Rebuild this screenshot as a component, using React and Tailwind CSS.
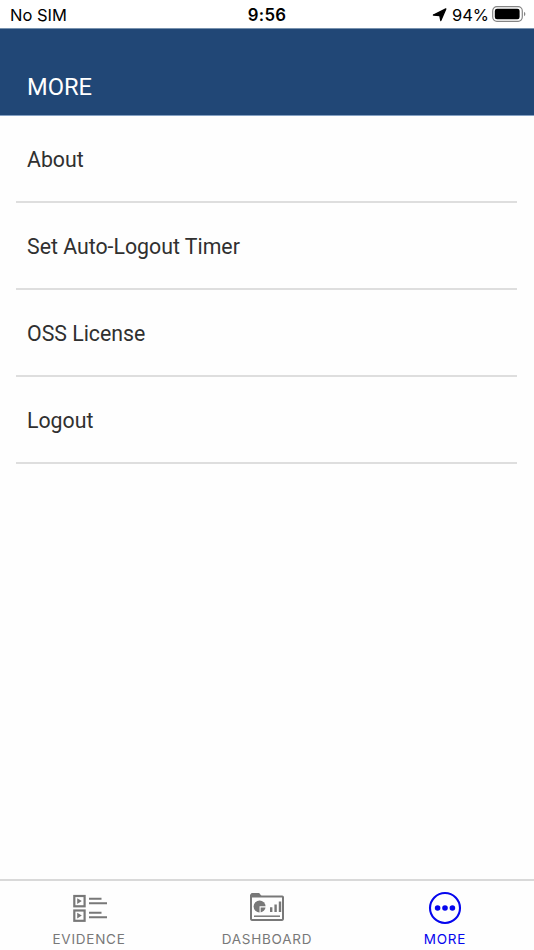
import React from "react";

const items = ["About", "Set Auto-Logout Timer", "OSS License", "Logout"];

function StatusBar() {
  return (
    <div className="grid h-7 grid-cols-3 items-center bg-white pt-0.5 font-['Inter',sans-serif] text-[16.5px] text-black">
      <span className="pl-[10px]">No SIM</span>
      <span className="pt-px text-center text-[16.8px] font-semibold tracking-[0.3px]">9:56</span>
      <div className="flex items-center justify-end pr-[8px]">
        <svg width="15" height="14" viewBox="0 0 15 14" className="mr-[5px]">
          <path d="M13.8 .9 8.8 12.6 7.8 7.6 1.4 7Z" fill="#000" stroke="#000" strokeWidth="1.3" strokeLinejoin="round" />
        </svg>
        <span>94%</span>
        <svg width="34" height="16" viewBox="0 0 34 16" className="ml-[3px] -mt-0.5">
          <rect x=".7" y=".7" width="29.6" height="14.6" rx="4.2" fill="none" stroke="#858585" strokeWidth="1.2" />
          <rect x="2.8" y="2.8" width="24.8" height="10.4" rx="2.2" fill="#000" />
          <path d="M32 5.8Q33.4 6.5 33.4 8T32 10.2Z" fill="#858585" />
        </svg>
      </div>
    </div>
  );
}

function EvidenceIcon() {
  return (
    <svg width="34" height="28" viewBox="0 0 34 28" fill="none" stroke="#787878" strokeWidth="2.2" className="ml-[2px]">
      <rect x="1.3" y="2" width="10.3" height="10.3" />
      <rect x="1.3" y="16.5" width="10.3" height="10.3" />
      <path d="M4.2 4.2v5.8l4.6-2.9ZM4.2 18.7v5.8l4.6-2.9Z" fill="#787878" stroke="none" />
      <path d="M16 4.7h12.5M16 9.2h18M16 18.8h12.5M16 23.3h18" strokeWidth="2" />
    </svg>
  );
}

function DashboardIcon() {
  return (
    <svg width="36" height="30" viewBox="0 0 36 30" fill="none" stroke="#787878" className="-ml-px">
      <rect x="2" y="3.5" width="32" height="23.4" rx=".8" strokeWidth="2" />
      <path d="M1 4V1.8L2.6 0h7.6L12.5 3v1Z" fill="#787878" stroke="none" />
      <circle cx="10.6" cy="13.4" r="6" fill="#787878" stroke="none" />
      <path d="M17.2 13.9H11.1V20" stroke="#fefefe" strokeWidth="1.1" />
      <path d="M22.2 14.2V19M26.6 11.4V19M31 8.4V19" strokeWidth="2.4" />
      <path d="M5 23.2h26" strokeWidth="1.5" />
    </svg>
  );
}

function MoreIcon() {
  return (
    <svg width="34" height="34" viewBox="0 0 34 34">
      <circle cx="17" cy="17" r="15" fill="none" stroke="#0505ee" strokeWidth="2.1" />
      <g fill="#0505ee">
        <circle cx="9.6" cy="17" r="2.8" />
        <circle cx="17" cy="17" r="2.8" />
        <circle cx="24.4" cy="17" r="2.8" />
      </g>
    </svg>
  );
}

function Tab({ icon, label, active }) {
  return (
    <button className={`flex flex-col items-center font-['Inter',sans-serif] text-[13.5px] leading-5 ${active ? "text-[#0505ee]" : "text-[#787878]"}`}>
      <span className="flex h-[54px] items-center justify-center">{icon}</span>
      <span className="-mt-[6px] tracking-[0.75px]">{label}</span>
    </button>
  );
}

export default function App() {
  return (
    <div className="flex h-[950px] w-[534px] flex-col overflow-hidden bg-[#fefefe] font-['Roboto',sans-serif]">
      <StatusBar />
      <header className="flex h-[88px] items-end border-y border-t-[#7892ae] border-b-[#84a0c2] bg-[#214776] px-[27px] pb-[12px]">
        <h1 className="text-[23.7px] leading-8 text-white">MORE</h1>
      </header>
      <ul className="flex-1 pl-4 pr-[17px]">
        {items.map((item) => (
          <li key={item} className="flex h-[87px] items-center border-b-2 border-[#dedede] pl-[11px] pt-[3px] text-[21.3px] text-[#303030]">
            {item}
          </li>
        ))}
      </ul>
      <nav className="grid h-[71px] grid-cols-3 border-t-2 border-[#d9d9d9]">
        <Tab icon={<EvidenceIcon />} label="EVIDENCE" />
        <Tab icon={<DashboardIcon />} label="DASHBOARD" />
        <Tab icon={<MoreIcon />} label="MORE" active />
      </nav>
    </div>
  );
}
